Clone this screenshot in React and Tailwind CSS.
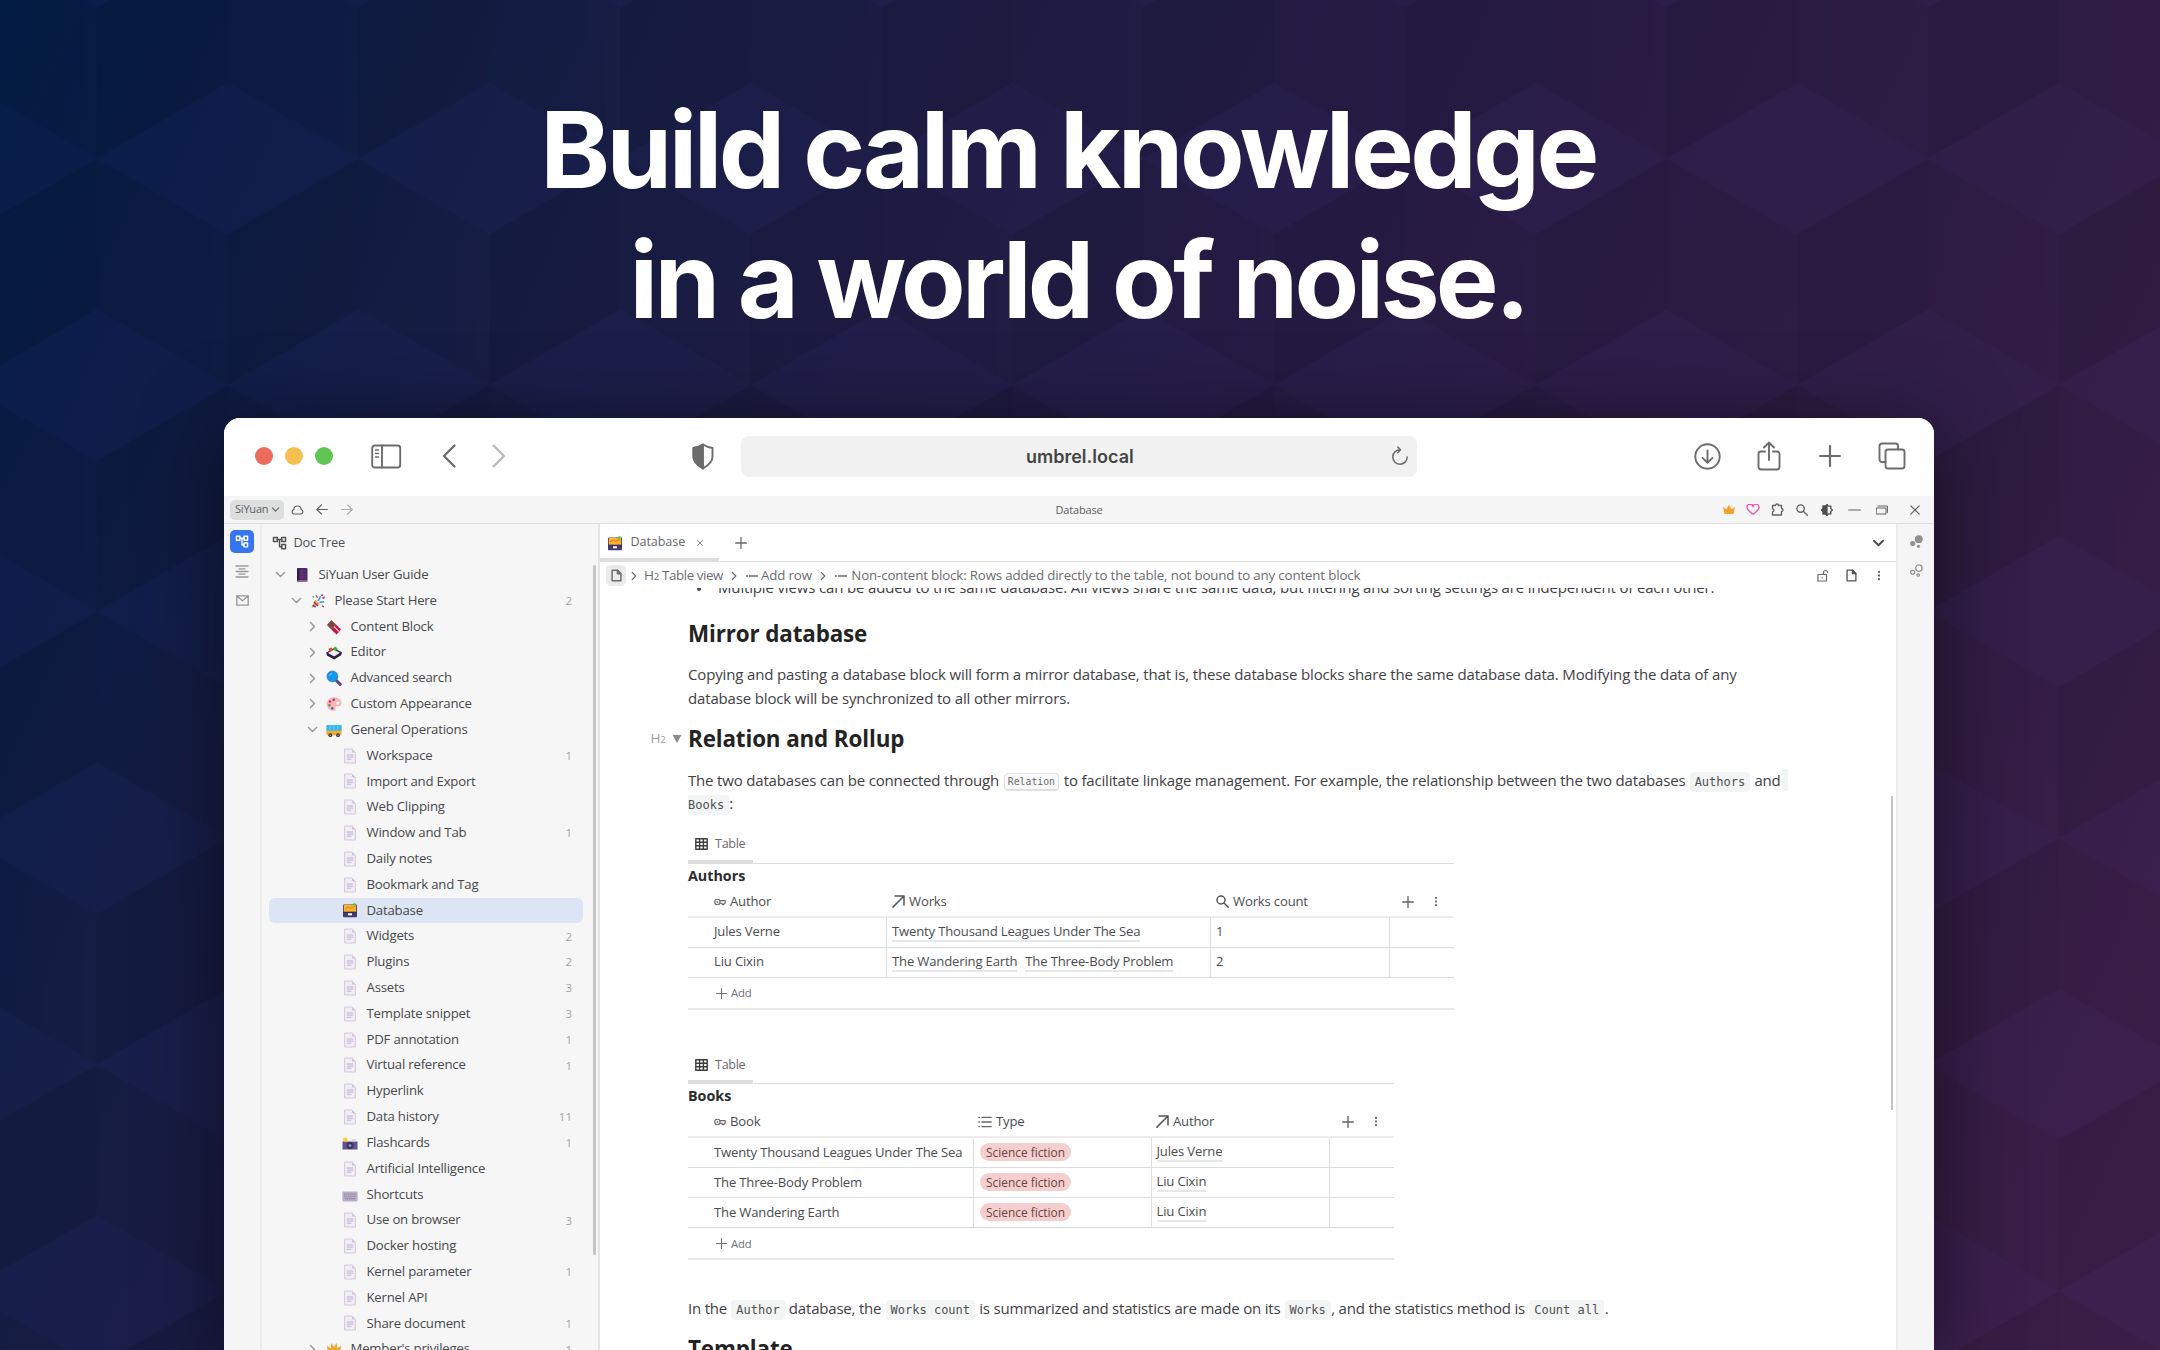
import React from "react";

/* ---------- Backdrop ---------- */

const Cube = ({ x, y }) => (
  <g transform={`translate(${x} ${y})`}>
    <polygon points="0,0 130.8,75.5 0,151 -130.8,75.5" fill="#5038e0" fillOpacity="0.03" />
    <polygon points="-130.8,75.5 0,151 0,302 -130.8,226.5" fill="url(#faceLeft)" />
    <polygon points="130.8,75.5 0,151 0,302 130.8,226.5" fill="#000010" fillOpacity="0.075" />
  </g>
);

const Backdrop = () => (
  <svg className="absolute inset-0 h-full w-full" viewBox="0 0 2160 1350" preserveAspectRatio="none">
    <defs>
      <linearGradient id="base" gradientUnits="userSpaceOnUse" x1="0" y1="0" x2="2250" y2="1000">
        <stop offset="0" stopColor="#031d44" />
        <stop offset="0.1" stopColor="#0c1c44" />
        <stop offset="0.22" stopColor="#161d44" />
        <stop offset="0.38" stopColor="#1f1c44" />
        <stop offset="0.55" stopColor="#271c45" />
        <stop offset="0.8" stopColor="#311d44" />
        <stop offset="1" stopColor="#3d1f48" />
      </linearGradient>
      <linearGradient id="faceLeft" x1="0" y1="0" x2="1" y2="0">
        <stop offset="0" stopColor="#000010" stopOpacity="0.04" />
        <stop offset="1" stopColor="#000010" stopOpacity="0.015" />
      </linearGradient>
      <pattern id="cubes" patternUnits="userSpaceOnUse" x="96.9" y="83" width="261.6" height="453">
        <Cube x={0} y={-226.5} />
        <Cube x={261.6} y={-226.5} />
        <Cube x={130.8} y={0} />
        <Cube x={0} y={226.5} />
        <Cube x={261.6} y={226.5} />
      </pattern>
    </defs>
    <rect width="2160" height="1350" fill="url(#base)" />
    <rect width="2160" height="1350" fill="url(#cubes)" />
  </svg>
);

/* ---------- Small icons ---------- */

const Ico = ({ className = "", vb = "0 0 24 24", sw = 2, children }) => (
  <svg viewBox={vb} className={`shrink-0 ${className}`} fill="none" stroke="currentColor" strokeWidth={sw} strokeLinecap="round" strokeLinejoin="round">
    {children}
  </svg>
);

const ChevR = ({ className }) => (
  <Ico className={className} vb="0 0 10 12" sw={1.6}><path d="M2.8 1.5 7.2 6l-4.4 4.5" /></Ico>
);
const ChevD = ({ className, sw = 1.6 }) => (
  <Ico className={className} vb="0 0 12 10" sw={sw}><path d="M1.5 2.8 6 7.2l4.5-4.4" /></Ico>
);
const Plus = ({ className, sw = 1.5 }) => (
  <Ico className={className} vb="0 0 12 12" sw={sw}><path d="M6 .6v10.8M.6 6h10.8" /></Ico>
);
const Dots = ({ className }) => (
  <svg viewBox="0 0 4 12" className={`shrink-0 ${className}`} fill="currentColor">
    <rect x="1" y="1" width="2" height="2" /><rect x="1" y="5" width="2" height="2" /><rect x="1" y="9" width="2" height="2" />
  </svg>
);
const TreeIcon = ({ className }) => (
  <Ico className={className} vb="0 0 14 14" sw={1.5}>
    <rect x="1" y="1.4" width="3.8" height="4.2" /><rect x="9.2" y="1.4" width="3.8" height="4.2" /><rect x="9.2" y="8.6" width="3.8" height="4.2" />
    <path d="M4.8 3.5h4.4M7 3.5v7.2h2.2" />
  </Ico>
);
const Key = () => (
  <Ico className="h-[8px] w-[12px] text-[#68696b]" vb="0 0 12 8" sw={1.1}>
    <circle cx="3.4" cy="4" r="2.7" /><circle cx="3.4" cy="4" r="0.4" /><path d="M6 2.6h5.2v2.6H10v1.4H8.2V5.2H6" />
  </Ico>
);
const Arrow = () => (
  <Ico className="h-[13px] w-[13px] text-[#55565a]" vb="0 0 13 13" sw={1.5}><path d="M.9 12.1 12 1M3 1h9v9" /></Ico>
);
const Search = ({ className }) => (
  <Ico className={className} vb="0 0 13 13" sw={1.5}><circle cx="5" cy="5" r="4" /><path d="m8 8 4.3 4.3" /></Ico>
);
const ListIcon = () => (
  <Ico className="h-[12px] w-[14px] text-[#68696b]" vb="0 0 14 12" sw={1.4}>
    <path d="M.8 1.4h.6M.8 6h.6M.8 10.6h.6M4 1.4h9.2M4 6h9.2M4 10.6h9.2" />
  </Ico>
);
const Grid = () => (
  <Ico className="h-[12px] w-[13px] text-[#3b3b3b]" vb="0 0 13 12" sw={1.4}>
    <path d="M.8.8h11.4v10.4H.8zM.8 4.2h11.4M.8 7.7h11.4M4.6.8v10.4M8.4.8v10.4" />
  </Ico>
);
const FileIcon = ({ className, sw = 1.6 }) => (
  <Ico className={className} vb="0 0 12 14" sw={sw}>
    <path d="M1.2 1.2h6L10.8 5v7.8H1.2z" /><path d="M7 1.2V5h3.8z" fill="currentColor" />
  </Ico>
);
const Dash = () => (
  <svg viewBox="0 0 12 4" className="h-[4px] w-[12px] shrink-0" stroke="currentColor" strokeWidth="1.3"><path d="M0 2h2M3 2h9" /></svg>
);
const Heading2 = ({ className }) => (
  <span className={`flex items-baseline leading-none ${className}`}>
    <span className="text-[13.5px]">H</span>
    <span className="text-[9.5px]">2</span>
  </span>
);

/* ---------- Document emoji ---------- */

const Emoji = ({ children }) => (
  <svg viewBox="0 0 16 16" className="h-[16px] w-[16px] shrink-0">{children}</svg>
);

const emoji = {
  page: (
    <Emoji>
      <path d="M2.6 1h7.6l3.2 3.2V15H2.6z" fill="#f1ecf6" stroke="#cfc5da" strokeWidth=".9" />
      <path d="M10 1v3.4h3.4z" fill="#cfc5da" />
      <path d="M4.8 7h6.4M4.8 9.1h6.4M4.8 11.2h4.4" stroke="#b9aec6" strokeWidth=".9" />
    </Emoji>
  ),
  book: (
    <Emoji>
      <rect x="3" y="1" width="10.5" height="14" rx="1" fill="#4b2a66" />
      <path d="M3 1.5h1.8v13H3z" fill="#2b1b45" />
      <path d="M5.5 4h7M5.5 7h7M5.5 10h7M8 2v11" stroke="#743a80" strokeWidth=".7" />
      <path d="M3.4 14h9.8" stroke="#d9a5c0" strokeWidth="1" />
    </Emoji>
  ),
  party: (
    <Emoji>
      <path d="M1.5 15 5 6.5l5 4.8z" fill="#f0a53a" />
      <path d="M2.6 12.4 5.8 14M4 9l4 4" stroke="#7a3c9c" strokeWidth="1.4" />
      <path d="M8 8c.5-2 2.6-2.6 2.2-4.8M9.5 9.3c2-.9 2.6 0 4.6-.6" stroke="#2f9be8" strokeWidth="1.5" fill="none" />
      <path d="M6.2 2.2 7.4 4.8M12.6 5.6l2-2M12 12.6l2 1.4" stroke="#e5345e" strokeWidth="1.5" />
      <circle cx="12" cy="2.2" r="1" fill="#5b3cc4" /><circle cx="3.3" cy="3.8" r=".9" fill="#2fb34c" />
    </Emoji>
  ),
  chocolate: (
    <Emoji>
      <path d="M5.4 1 10 5.6 5.2 10.6.9 6z" fill="#7c4a3c" />
      <path d="m10 5.6 5 5-4.4 4.8-5.4-4.8z" fill="#c4124a" />
      <path d="m8 7.6 4.8 4.8" stroke="#f3d8e0" strokeWidth="1.3" />
    </Emoji>
  ),
  editor: (
    <Emoji>
      <path d="m.8 9 7-4 7.6 3.6-7.2 4.6z" fill="#efeaf4" stroke="#2c2140" strokeWidth="1.3" />
      <path d="M.8 9v2.4l7.4 4V13zM15.4 8.6v2.4l-7.2 4.4V13z" fill="#2c2140" />
      <path d="m2.5 4.5 3-1 1.6 2.6-3.4 2z" fill="#dd4b39" />
      <path d="m6.6 4.5 2.8-1.9 2.6 2.6-3.3 1.6z" fill="#45b02c" />
    </Emoji>
  ),
  search: (
    <Emoji>
      <path d="m9.6 9.8 4.6 4.6" stroke="#57478a" strokeWidth="3" strokeLinecap="round" />
      <circle cx="6.4" cy="6.4" r="5.4" fill="#0f9bea" stroke="#3f6fb4" strokeWidth=".8" />
      <path d="M3.5 5.5a3 3 0 0 1 2.5-2" stroke="#8fd4fb" strokeWidth="1" fill="none" />
    </Emoji>
  ),
  palette: (
    <Emoji>
      <path d="M8 1.2c4.3 0 7.5 2.6 7.5 6 0 3-3 3.3-5 3-1.5-.2-1.5 1-1 2.2.5 1.3.1 2.4-1.700 2.400C3.500 14.800.7 11.800.7 8S3.800 1.200 8 1.200z" fill="#fbb3ab" />
      <circle cx="4" cy="5.5" r="1.2" fill="#e8197d" /><circle cx="7.7" cy="3.7" r="1.2" fill="#6a3fc9" />
      <circle cx="3.4" cy="9.3" r="1.2" fill="#32a852" /><circle cx="6.2" cy="12.2" r="1.2" fill="#2b6de0" />
      <circle cx="11.8" cy="7" r="1.5" fill="#fff" />
    </Emoji>
  ),
  bus: (
    <Emoji>
      <rect x=".5" y="3" width="15" height="10.2" rx="1" fill="#fbaa28" />
      <rect x=".5" y="3" width="15" height="5.8" rx=".8" fill="#2fb8f2" />
      <path d="M4 3v5.5M7.8 3v5.5M11.6 3v5.5" stroke="#7fd5fa" strokeWidth=".8" />
      <circle cx="4.3" cy="13.2" r="1.9" fill="#33313f" /><circle cx="12" cy="13.2" r="1.9" fill="#33313f" />
      <circle cx="4.3" cy="13.2" r=".7" fill="#c9c9d2" /><circle cx="12" cy="13.2" r=".7" fill="#c9c9d2" />
    </Emoji>
  ),
  drawer: (
    <Emoji>
      <rect x="1" y="2.4" width="14" height="12.8" rx=".8" fill="#453a72" />
      <path d="M1.8 2.8h12.4v7H1.8z" fill="#fbb423" />
      <path d="m3 6.8 3-1.8 2.5 1.2 5-2" stroke="#ef7d32" strokeWidth="1.1" fill="none" />
      <path d="M9 2.6 13.4 1v2.2H9z" fill="#35c46a" />
      <path d="M1 9.8h14V11H1z" fill="#372d60" />
      <rect x="6" y="11.3" width="4" height="2" fill="#fff" />
    </Emoji>
  ),
  camera: (
    <Emoji>
      <path d="M.5 6.5h15v8H.5z" fill="#5f5391" />
      <path d="M9.5 4.2h4.5v2.3H9.5z" fill="#d8d3e2" />
      <circle cx="3.3" cy="4.6" r="2.2" fill="#fccb2e" />
      <circle cx="8" cy="10.5" r="3.4" fill="#3a3357" /><circle cx="8" cy="10.5" r="1.5" fill="#8f86b5" />
    </Emoji>
  ),
  keyboard: (
    <Emoji>
      <rect x=".4" y="5.6" width="15.2" height="10" rx="1" fill="#b9aec9" />
      <path d="M2 8h12M2 10.2h12M3 12.6h10" stroke="#8e82a4" strokeWidth="1.1" strokeDasharray="1.4 .7" />
    </Emoji>
  ),
  crown: (
    <Emoji>
      <path d="m.8 4.5 3.7 3L5.5 2 8 6l2.5-4 1 5.5 3.7-3L13.5 14h-11z" fill="#f2a431" />
    </Emoji>
  ),
};

/* ---------- Sidebar ---------- */

const docs = [
  { t: "SiYuan User Guide", l: 0, e: "book", open: true },
  { t: "Please Start Here", l: 1, e: "party", open: true, n: 2 },
  { t: "Content Block", l: 2, e: "chocolate", open: false },
  { t: "Editor", l: 2, e: "editor", open: false },
  { t: "Advanced search", l: 2, e: "search", open: false },
  { t: "Custom Appearance", l: 2, e: "palette", open: false },
  { t: "General Operations", l: 2, e: "bus", open: true },
  { t: "Workspace", l: 3, n: 1 },
  { t: "Import and Export", l: 3 },
  { t: "Web Clipping", l: 3 },
  { t: "Window and Tab", l: 3, n: 1 },
  { t: "Daily notes", l: 3 },
  { t: "Bookmark and Tag", l: 3 },
  { t: "Database", l: 3, e: "drawer", active: true },
  { t: "Widgets", l: 3, n: 2 },
  { t: "Plugins", l: 3, n: 2 },
  { t: "Assets", l: 3, n: 3 },
  { t: "Template snippet", l: 3, n: 3 },
  { t: "PDF annotation", l: 3, n: 1 },
  { t: "Virtual reference", l: 3, n: 1 },
  { t: "Hyperlink", l: 3 },
  { t: "Data history", l: 3, n: 11 },
  { t: "Flashcards", l: 3, e: "camera", n: 1 },
  { t: "Artificial Intelligence", l: 3 },
  { t: "Shortcuts", l: 3, e: "keyboard" },
  { t: "Use on browser", l: 3, n: 3 },
  { t: "Docker hosting", l: 3 },
  { t: "Kernel parameter", l: 3, n: 1 },
  { t: "Kernel API", l: 3 },
  { t: "Share document", l: 3, n: 1 },
  { t: "Member's privileges", l: 2, e: "crown", open: false, n: 1 },
];

const indent = ["pl-[6px]", "pl-[22px]", "pl-[38px]", "pl-[54px]"];

const DocRow = ({ d }) => (
  <div className={`flex h-[25.82px] items-center rounded-[6px] pr-[10.5px] ${indent[d.l]} ${d.active ? "bg-[#dde4f4]" : ""}`}>
    <span className="flex w-[19px] shrink-0 text-[#96989b]">
      {d.open === true && <ChevD className="h-[9px] w-[11px]" />}
      {d.open === false && <ChevR className="ml-[1px] h-[11px] w-[9px]" />}
    </span>
    {emoji[d.e || "page"]}
    <span className="ml-[9px] flex-1 whitespace-nowrap text-[13.2px] tracking-[-0.21px] text-[#47494c]">{d.t}</span>
    <span className="text-[11.5px] text-[#a3a4a6]">{d.n}</span>
  </div>
);

const Sidebar = () => (
  <aside className="flex w-[338px] shrink-0 flex-col border-r-2 border-[#e4e4e4] bg-[#f6f6f6]">
    <div className="flex h-[38px] shrink-0 items-center pl-[9.5px] text-[#505255]">
      <TreeIcon className="h-[14px] w-[15px]" />
      <span className="ml-[7px] text-[12.8px] tracking-[-0.2px]">Doc Tree</span>
    </div>
    <div className="flex min-h-0 flex-1">
      <div className="min-h-0 flex-1 overflow-hidden pl-[6.5px]">
        {docs.map((d) => (
          <DocRow key={d.t} d={d} />
        ))}
      </div>
      <div className="ml-[10.5px] mr-[2px] mt-[3px] h-[690px] w-[3px] shrink-0 rounded bg-[#c4c5c7]" />
    </div>
  </aside>
);

/* ---------- Editor content ---------- */

const Code = ({ children }) => (
  <span className="mx-[0.5px] rounded-[4px] bg-[#f3f4f4] px-[5px] py-[3px] font-['DejaVu_Sans_Mono',monospace] text-[12px] leading-none tracking-normal text-[#505255]">{children}</span>
);

const Tab = () => (
  <div className="flex h-full w-[65px] items-center border-b-[3px] border-[#dcdedf] pl-[7px] pt-[3px]">
    <Grid />
    <span className="ml-[7px] text-[12.6px] tracking-[-0.3px] text-[#6a6c6f]">Table</span>
  </div>
);

const AddRow = () => (
  <div className="flex h-[32px] items-center border-b-2 border-[#e8e8e8] pl-[28px] text-[#707275]">
    <Plus className="h-[11px] w-[11px]" sw={1.2} />
    <span className="ml-[4px] text-[11.3px] tracking-[-0.2px]">Add</span>
  </div>
);

const Head = ({ icon, children, className }) => (
  <div className={`flex items-center gap-[4px] ${className}`}>
    {icon}
    <span>{children}</span>
  </div>
);

const Linked = ({ children }) => (
  <span className="border-b-2 border-[#e6e7e8] leading-[18px]">{children}</span>
);

const cell = "flex items-center border-r border-[#dfe0e1] pb-[1px]";

const AuthorsTable = () => (
  <section className="mt-[10px] w-[766px] text-[13.1px] tracking-[-0.17px] text-[#4b4d50]">
    <div className="flex h-[39px] border-b border-[#dcdedf]"><Tab /></div>
    <div className="h-[23px] text-[14.3px] font-bold leading-[24px] tracking-normal text-[#2b2b2d]">Authors</div>
    <div className="flex h-[31px] items-center border-b-2 border-[#ececed]">
      <Head className="w-[199px] pl-[26px]" icon={<Key />}>Author</Head>
      <Head className="w-[324px] pl-[5px]" icon={<Arrow />}>Works</Head>
      <Head className="w-[178px] pl-[5px]" icon={<Search className="h-[13px] w-[13px] text-[#55565a]" />}>Works count</Head>
      <Plus className="ml-[13px] h-[12px] w-[12px] text-[#606265]" sw={1.3} />
      <Dots className="ml-[20px] h-[11px] w-[4px] text-[#606265]" />
    </div>
    {[
      ["Jules Verne", ["Twenty Thousand Leagues Under The Sea"], 1],
      ["Liu Cixin", ["The Wandering Earth", "The Three-Body Problem"], 2],
    ].map(([name, works, n]) => (
      <div key={name} className="flex h-[30px] border-b border-[#dcddde]">
        <div className={`${cell} w-[199px] pl-[26px]`}>{name}</div>
        <div className={`${cell} w-[324px] gap-[8px] pl-[5px]`}>{works.map((w) => <Linked key={w}>{w}</Linked>)}</div>
        <div className={`${cell} w-[179px] pl-[5px]`}>{n}</div>
      </div>
    ))}
    <AddRow />
  </section>
);

const BooksTable = () => (
  <section className="mt-[36px] w-[706px] text-[13.1px] tracking-[-0.17px] text-[#4b4d50]">
    <div className="flex h-[38px] border-b border-[#dcdedf]"><Tab /></div>
    <div className="h-[23px] text-[14.3px] font-bold leading-[24px] tracking-normal text-[#2b2b2d]">Books</div>
    <div className="flex h-[31px] items-center border-b-2 border-[#ececed]">
      <Head className="w-[285px] pl-[26px]" icon={<Key />}>Book</Head>
      <Head className="w-[178px] pl-[5px]" icon={<ListIcon />}>Type</Head>
      <Head className="w-[178px] pl-[5px]" icon={<Arrow />}>Author</Head>
      <Plus className="ml-[13px] h-[12px] w-[12px] text-[#606265]" sw={1.3} />
      <Dots className="ml-[20px] h-[11px] w-[4px] text-[#606265]" />
    </div>
    {[
      ["Twenty Thousand Leagues Under The Sea", "Jules Verne"],
      ["The Three-Body Problem", "Liu Cixin"],
      ["The Wandering Earth", "Liu Cixin"],
    ].map(([book, author]) => (
      <div key={book} className="flex h-[30.1px] border-b border-[#dcddde]">
        <div className={`${cell} w-[286px] whitespace-nowrap pl-[26px]`}>{book}</div>
        <div className={`${cell} w-[178px] pl-[6px]`}>
          <span className="rounded-full bg-[#f4cfce] px-[6px] text-[11.9px] leading-[18px] tracking-normal text-[#6b4443]">Science fiction</span>
        </div>
        <div className={`${cell} w-[178px] pl-[4.5px]`}><Linked>{author}</Linked></div>
      </div>
    ))}
    <AddRow />
  </section>
);

const H2 = ({ children, className = "" }) => (
  <h2 className={`h-[30px] whitespace-nowrap text-[22.4px] font-bold leading-[30px] tracking-[-0.13px] text-[#232325] ${className}`}>{children}</h2>
);

const Content = () => (
  <article className="min-h-0 flex-1 overflow-hidden pl-[88px] text-[15px] leading-[23.2px] tracking-[-0.153px] text-[#3f4144]">
    <p className="-mt-[12px] flex h-[24px] whitespace-nowrap">
      <span className="mt-[11px] ml-[9px] mr-[17px] h-[4px] w-[4px] rounded-full bg-[#4b4d50]" />
      Multiple views can be added to the same database. All views share the same data, but filtering and sorting settings are independent of each other.
    </p>
    <H2 className="mt-[19px]">Mirror database</H2>
    <p className="mt-[14.4px] h-[46.4px] whitespace-nowrap">
      Copying and pasting a database block will form a mirror database, that is, these database blocks share the same database data. Modifying the data of any
      <br />
      database block will be synchronized to all other mirrors.
    </p>
    <div className="-ml-[37.5px] mt-[14.4px] flex items-center">
      <Heading2 className="w-[21px] text-[#9c9ea2]" />
      <svg viewBox="0 0 10 9" className="mr-[6.5px] h-[8px] w-[10px] fill-[#8a8c90]"><path d="M0 0h10L5 9z" /></svg>
      <H2>Relation and Rollup</H2>
    </div>
    <p className="mt-[14.5px] h-[46.4px] whitespace-nowrap tracking-[-0.175px]">
      The two databases can be connected through{" "}
      <span className="relative -top-[1px] mx-[1px] rounded-[4px] border border-b-2 border-[#dfe0e1] bg-[#fafafa] px-[3px] py-[2px] font-['DejaVu_Sans_Mono',monospace] text-[9.8px] leading-none tracking-normal text-[#6a6c6f]">Relation</span>{" "}
      to facilitate linkage management. For example, the relationship between the two databases <Code>Authors</Code> and{" "}
      <span className="ml-[1px] rounded-l-[4px] bg-[#f3f4f4] py-[1px] pl-[6px]" />
      <br />
      <span className="rounded-r-[4px] bg-[#f3f4f4] py-[3px] pr-[5px] font-['DejaVu_Sans_Mono',monospace] text-[12px] leading-none tracking-normal text-[#505255]">Books</span>:
    </p>
    <AuthorsTable />
    <BooksTable />
    <p className="mt-[36.7px] h-[24px] whitespace-nowrap tracking-[-0.195px]">
      In the <Code>Author</Code> database, the <Code>Works count</Code> is summarized and statistics are made on its <Code>Works</Code>, and the statistics method is{" "}
      <Code>Count all</Code>.
    </p>
    <H2 className="mt-[12.6px]">Template</H2>
  </article>
);

/* ---------- Editor frame ---------- */

const Editor = () => (
  <main className="flex min-w-0 flex-1 flex-col bg-white">
    <div className="flex h-[38px] shrink-0 items-center border-b border-[#dfe0e0] text-[#66686b]">
      <div className="flex h-[37px] w-[119px] items-center border-b-[3px] border-[#dedede] pl-[7px] pt-[3px]">
        {emoji.drawer}
        <span className="ml-[7.5px] text-[12.6px] tracking-[-0.1px]">Database</span>
        <Ico className="ml-[12px] h-[6px] w-[6px] text-[#808285]" vb="0 0 6 6" sw={1}><path d="m.5.5 5 5M5.5.5l-5 5" /></Ico>
      </div>
      <Plus className="ml-[16px] h-[12px] w-[12px]" sw={1.3} />
      <ChevD className="ml-auto mr-[11px] h-[10px] w-[13px] text-[#4c4e51]" sw={2} />
    </div>
    <div className="flex h-[26px] shrink-0 items-center whitespace-nowrap pl-[6px] pr-[15px] pt-[1px] text-[13.3px] tracking-[-0.15px] text-[#6b6d70]">
      <span className="flex h-[21px] w-[20px] items-center justify-center rounded-[5px] bg-[#ebebeb]"><FileIcon className="h-[13px] w-[11px]" /></span>
      <ChevR className="ml-[4px] h-[10px] w-[8px]" />
      <Heading2 className="ml-[6px]" />
      <span className="ml-[3px] tracking-[-0.4px]">Table view</span>
      <ChevR className="ml-[7px] mr-[7.5px] h-[10px] w-[8px]" />
      <Dash />
      <span className="ml-[3.5px]">Add row</span>
      <ChevR className="ml-[7px] mr-[8.5px] h-[10px] w-[8px]" />
      <Dash />
      <span className="ml-[4px]">Non-content block: Rows added directly to the table, not bound to any content block</span>
      <Ico className="ml-auto h-[13px] w-[12px] text-[#66686b]" vb="0 0 12 13" sw={1.2}>
        <path d="M1 5.500h8.500V12H1zM6.500 5.500V3.500a2 2 0 0 1 4 0M5.200 8.500v.4" />
      </Ico>
      <FileIcon className="ml-[17px] h-[13px] w-[11px] text-[#505255]" sw={1.4} />
      <Dots className="ml-[20px] h-[11px] w-[4px] text-[#505255]" />
    </div>
    <div className="flex min-h-0 flex-1">
      <Content />
      <div className="mr-[3px] mt-[208px] h-[314px] w-[2px] shrink-0 bg-[#c4c5c7]" />
    </div>
  </main>
);

/* ---------- Window chrome ---------- */

const BrowserBar = () => (
  <header className="flex h-[78px] shrink-0 items-center bg-white pl-[31px] pr-[28px] pb-[2px] text-[#6c6c6c]">
    <div className="flex gap-[12px]">
      <span className="h-[18px] w-[18px] rounded-full bg-[#ec6a5e]" />
      <span className="h-[18px] w-[18px] rounded-full bg-[#f4bf4f]" />
      <span className="h-[18px] w-[18px] rounded-full bg-[#61c554]" />
    </div>
    <Ico className="ml-[38px] h-[25px] w-[31px]" vb="0 0 31 25" sw={1.9}>
      <rect x="1.2" y="1.5" width="28" height="22" rx="2.5" /><path d="M11 1.5v22" /><path d="M4.5 6h3M4.5 9.5h3M4.5 13h3" strokeWidth="1.4" />
    </Ico>
    <Ico className="ml-[40px] h-[24px] w-[14px]" vb="0 0 14 24" sw={2.3}><path d="M12.5 1.5 2 12l10.5 10.5" /></Ico>
    <Ico className="ml-[36px] h-[24px] w-[14px] text-[#b9b9b9]" vb="0 0 14 24" sw={2.3}><path d="M1.5 1.5 12 12 1.5 22.5" /></Ico>
    <Ico className="ml-[185px] h-[27px] w-[24px]" vb="0 0 24 27" sw={1.9}>
      <path d="M12 1.5c3 2 6 3 9.500 3.500v9c0 5-4.500 8.500-9.500 11.500-5-3-9.500-6.500-9.500-11.500V5C6 4.500 9 3.500 12 1.500z" />
      <path d="M12 1.500C9 3.500 6 4.500 2.500 5v9c0 5 4.500 8.500 9.500 11.500z" fill="currentColor" />
    </Ico>
    <div className="ml-[26px] flex h-[41px] w-[676px] items-center rounded-[8px] bg-[#f1f1f1] pr-[8px]">
      <span className="ml-[285px] font-['Inter',sans-serif] text-[18px] font-semibold text-[#454545]">umbrel.local</span>
      <Ico className="ml-auto h-[20px] w-[18px]" vb="0 0 18 20" sw={1.5}>
        <path d="M9.500 3.800A7.200 7.200 0 1 0 16.200 11M9.500 3.800 6.800 1M9.500 3.800 6.800 6.700" />
      </Ico>
    </div>
    <div className="ml-auto flex items-center">
      <Ico className="h-[27px] w-[27px]" vb="0 0 27 27" sw={1.9}>
        <circle cx="13.5" cy="13.5" r="12.2" /><path d="M13.500 7.500v12M8.500 14.800l5 5 5-5" />
      </Ico>
      <Ico className="ml-[36px] h-[30px] w-[24px]" vb="0 0 24 30" sw={1.9}>
        <path d="M8 10.500H4a2.500 2.500 0 0 0-2.500 2.500v13A2.500 2.500 0 0 0 4 28.500h16a2.500 2.500 0 0 0 2.500-2.500V13a2.500 2.500 0 0 0-2.500-2.500h-4M12 19V1.500M7 6.500l5-5 5 5" />
      </Ico>
      <Plus className="ml-[38px] h-[22px] w-[22px]" sw={1.2} />
      <Ico className="ml-[37px] h-[28px] w-[28px]" vb="0 0 28 28" sw={1.9}>
        <rect x="7.5" y="7.5" width="19" height="19" rx="2.5" /><path d="M7.500 20H4a2.500 2.500 0 0 1-2.500-2.500V4A2.500 2.500 0 0 1 4 1.500h13.500A2.500 2.500 0 0 1 20 4v3.500" />
      </Ico>
    </div>
  </header>
);

const AppBar = () => (
  <div className="grid h-[28px] shrink-0 grid-cols-3 items-center border-b border-[#dddddd] bg-[#f5f5f5] text-[#5f6164]">
    <div className="flex items-center pl-[6px]">
      <span className="flex h-[20px] w-[54px] items-center rounded-[5px] bg-[#dddede] pl-[5px] text-[11px] tracking-[-0.2px]">
        SiYuan <ChevD className="ml-[3px] h-[7px] w-[9px]" />
      </span>
      <Ico className="ml-[7px] h-[10px] w-[13px]" vb="0 0 13 10" sw={1.2}><path d="M3 9h7a2.200 2.200 0 0 0 .3-4.300C10 2.500 8.500 1 6.500 1S3 2.500 2.700 4.700A2.200 2.200 0 0 0 3 9z" /></Ico>
      <Ico className="ml-[12px] h-[11px] w-[12px]" vb="0 0 12 11" sw={1.2}><path d="M11.300 5.500H1M5.500.8.8 5.500l4.700 4.700" /></Ico>
      <Ico className="ml-[13px] h-[11px] w-[12px] text-[#a9abae]" vb="0 0 12 11" sw={1.2}><path d="M.7 5.500H11M6.500.8l4.700 4.700-4.700 4.700" /></Ico>
    </div>
    <span className="pt-[1px] text-center text-[11px] tracking-[-0.15px]">Database</span>
    <div className="flex items-center justify-end pr-[14px]">
      <svg viewBox="0 0 12 9" className="h-[9px] w-[12px] fill-[#f2a431]"><path d="m0 1.800 3.200 2.400L6 0l2.800 4.200L12 1.800 10.600 9H1.400z" /></svg>
      <Ico className="ml-[11px] h-[11px] w-[14px] text-[#ea4fae]" vb="0 0 15 12" sw={1.4}><path d="M7.500 11.200C4 8.500 1 6.500 1 4a3.200 3.200 0 0 1 6.500-1A3.200 3.200 0 0 1 14 4c0 2.500-3 4.500-6.500 7.200z" /></Ico>
      <Ico className="ml-[11px] h-[13px] w-[13px]" vb="0 0 13 13" sw={1.3}>
        <path d="M1.500 2.500h3a1.500 1.500 0 0 1 3 0h3V5.500a1.500 1.500 0 0 1 0 3V12h-9V8.800a1.500 1.500 0 0 0 0-3z" />
      </Ico>
      <Search className="ml-[12px] h-[12px] w-[12px]" />
      <svg viewBox="0 0 13 13" className="ml-[13px] h-[12px] w-[12px] text-[#4c4e51]" fill="none" stroke="currentColor" strokeWidth="1.4">
        <path d="m6.500.8 1.700 1.600h2.400v2.400l1.600 1.700-1.600 1.700v2.400H8.200l-1.700 1.600-1.700-1.600H2.400V8.200L.8 6.500l1.600-1.700V2.400h2.400z" />
        <path d="M6.500 1v11L4.800 10.600H2.400V8.200L.8 6.500l1.600-1.700V2.400h2.400z" fill="currentColor" />
      </svg>
      <Ico className="ml-[15px] h-[12px] w-[13px]" vb="0 0 13 12" sw={1.1}><path d="M.6 6h11.800" /></Ico>
      <Ico className="ml-[15px] h-[10px] w-[12px]" vb="0 0 12 10" sw={1}><path d="M.6 3h9.400v6H.6zM2 1h9.400v6.500" /></Ico>
      <Ico className="ml-[22px] h-[10px] w-[10px]" vb="0 0 10 10" sw={1.2}><path d="m.8.8 8.400 8.400M9.200.8.8 9.200" /></Ico>
    </div>
  </div>
);

const LeftDock = () => (
  <nav className="flex w-[38px] shrink-0 flex-col items-center border-r-2 border-[#ececec] bg-[#f5f5f5] pt-[6px] text-[#96989b]">
    <span className="flex h-[23px] w-[24px] items-center justify-center rounded-[5px] bg-[#3575f0] text-white"><TreeIcon className="h-[13px] w-[14px]" /></span>
    <Ico className="mt-[12px] h-[13px] w-[14px]" vb="0 0 14 13" sw={1.3}><path d="M1 1h12M4 3.800h6M1 6.500h12M4 9.200h6M1 12h12" /></Ico>
    <Ico className="mt-[17px] h-[11px] w-[13px]" vb="0 0 13 11" sw={1.3}><path d="M.8.8h11.400v9.400H.8zM.8.8l5.700 5 5.700-5" /></Ico>
  </nav>
);

const RightDock = () => (
  <nav className="flex w-[38px] shrink-0 flex-col items-center border-l-2 border-[#ebebeb] bg-[#f5f5f5] pt-[11px] text-[#8f9195]">
    <svg viewBox="0 0 13 13" className="h-[13px] w-[13px] fill-current"><circle cx="8.8" cy="4.2" r="3.9" /><circle cx="2.7" cy="8.5" r="2.6" /><circle cx="8.5" cy="11.3" r="1.6" /></svg>
    <svg viewBox="0 0 13 13" className="mt-[16px] h-[13px] w-[13px] fill-none stroke-current" strokeWidth="1.3"><circle cx="8.9" cy="4.1" r="3.2" /><circle cx="2.7" cy="8.3" r="2" /><circle cx="8.2" cy="11" r="1.2" /></svg>
  </nav>
);

export default function App() {
  return (
    <div className="relative flex h-[1350px] w-[2160px] flex-col overflow-hidden bg-[#1e1c45] font-['Open_Sans','Noto_Sans',sans-serif]">
      <Backdrop />
      <h1 className="relative h-[418px] shrink-0 whitespace-nowrap pt-[85px] text-center font-['Inter',sans-serif] text-[105.5px] font-[660] leading-[130px] text-white">
        <span className="-ml-[24px] block tracking-[-3.5px]">Build calm knowledge</span>
        <span className="-ml-[4px] block tracking-[-3.7px]">in a world of noise.</span>
      </h1>
      <div className="relative mx-auto flex min-h-0 w-[1710px] flex-1 -translate-x-[1px] flex-col overflow-hidden rounded-t-[16px] bg-white shadow-[0_10px_80px_rgba(0,0,0,0.5)]">
        <BrowserBar />
        <AppBar />
        <div className="flex min-h-0 flex-1">
          <LeftDock />
          <Sidebar />
          <Editor />
          <RightDock />
        </div>
      </div>
    </div>
  );
}
